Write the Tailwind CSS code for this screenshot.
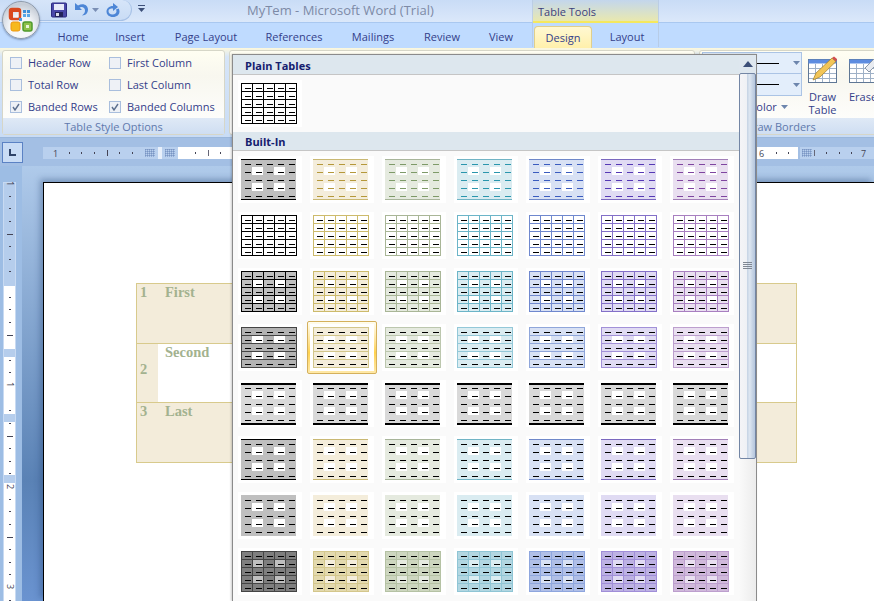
<!DOCTYPE html>
<html lang="en">
<head>
<meta charset="utf-8">
<title>MyTem - Microsoft Word (Trial)</title>
<script src="https://cdn.jsdelivr.net/npm/@tailwindcss/browser@4"></script>
</head>
<body class="m-0 overflow-hidden">
<div class="relative w-[874px] h-[601px] overflow-hidden flex flex-col bg-[#bfdbff] font-['Open_Sans',sans-serif] text-[11px] text-[#34408a]">

  <!-- title bar -->
  <div class="h-[23px] shrink-0 flex items-start bg-linear-to-b from-[#c9dcf6] to-[#dbe8fa] border-b border-[#a9c8f0]">
    <div class="ml-[22px] w-[110px] h-[21px] rounded-br-[12px] rounded-tr-[10px] bg-linear-to-b from-[#d6e5f9] to-[#c9dcf5] border-r border-b border-[#a6c1e6] flex items-center pl-[29px] gap-[6px]">
      <svg width="16" height="16" viewBox="0 0 16 16"><rect x="0.5" y="1" width="15" height="14" rx="1" fill="#4a48a8" stroke="#2c2b80"/><rect x="3" y="2" width="10" height="6" fill="#e7eaf8"/><rect x="4" y="10" width="8" height="5" fill="#23235a"/><rect x="5" y="11" width="3" height="3" fill="#d9dcea"/></svg>
      <svg width="16" height="16" viewBox="0 0 16 16"><path d="M2 1v7h7L6.5 5.5C9 4 12 5.500 12 8.500c0 2-1 3.500-3 5 4 0 6-3 6-6C15 3 10 .5 5 3.500z" fill="#4d86d6"/></svg>
      <svg class="-ml-[3px]" width="7" height="5" viewBox="0 0 7 5"><path d="M0 0h7L3.500 4z" fill="#7a8fb5"/></svg>
      <svg width="16" height="16" viewBox="0 0 16 16"><path d="M8 1v3C4 4 1.500 6.500 1.500 9.500S4 15 8 15s6.500-2.500 6.500-5.500c0-1-.3-2-.8-3l-2.700 1c.3.600.5 1.200.5 2 0 1.500-1.500 3-4 3s-4-1.500-4-3.500S5.500 6.500 8 6.500V9l5-4z" fill="#4d86d6"/></svg>
    </div>
    <svg class="ml-[6px] mt-[5px]" width="7" height="9" viewBox="0 0 7 9"><rect y="0" width="7" height="1" fill="#3c4f78"/><path d="M0 3h7L3.500 7z" fill="#3c4f78"/></svg>
    <div class="ml-[102px] mt-px text-[13px] leading-[18px] text-[#7d8aa6] whitespace-nowrap">MyTem - Microsoft Word (Trial)</div>
  </div>

  <!-- tabs -->
  <div class="h-[25px] shrink-0 flex items-end pl-[44px] bg-[#bfdbff] text-center">
    <div class="w-[58px] h-[21px] leading-[20px]">Home</div>
    <div class="w-[56px] h-[21px] leading-[20px]">Insert</div>
    <div class="w-[96px] h-[21px] leading-[20px]">Page Layout</div>
    <div class="w-[80px] h-[21px] leading-[20px]">References</div>
    <div class="w-[78px] h-[21px] leading-[20px]">Mailings</div>
    <div class="w-[60px] h-[21px] leading-[20px]">Review</div>
    <div class="w-[58px] mr-[4px] h-[21px] leading-[20px]">View</div>
    <div class="w-[58px] h-[22px] leading-[21px] rounded-t-[4px] border border-b-0 border-[#e0cf8c] bg-linear-to-b from-[#fff8d2] to-[#fff0ab]">Design</div>
    <div class="w-[70px] h-[21px] leading-[20px]">Layout</div>
  </div>

  <!-- ribbon -->
  <div class="h-[90px] shrink-0 flex gap-[4px] pt-[2px] pl-[2px] bg-linear-to-b from-[#fdf8dc] via-[#d6e5f8] via-10% to-[#c9dcf5] border-b border-[#9ab7dc] overflow-hidden">
    <div class="w-[223px] h-[85px] shrink-0 flex flex-col rounded-[3px] border border-[#d6d6c8] bg-linear-to-b from-[#fffef2] via-[#f8f7ef] via-30% to-white">
      <div class="flex-1 grid grid-cols-[99px_1fr] grid-rows-[22px_22px_22px] pl-[7px] pt-[1px]">
        <label class="flex items-center gap-[6px]"><span class="w-[12px] h-[12px] border border-[#a9bedd] bg-[#eef1f6]"></span>Header Row</label>
        <label class="flex items-center gap-[6px]"><span class="w-[12px] h-[12px] border border-[#a9bedd] bg-[#eef1f6]"></span>First Column</label>
        <label class="flex items-center gap-[6px]"><span class="w-[12px] h-[12px] border border-[#a9bedd] bg-[#eef1f6]"></span>Total Row</label>
        <label class="flex items-center gap-[6px]"><span class="w-[12px] h-[12px] border border-[#a9bedd] bg-[#eef1f6]"></span>Last Column</label>
        <label class="flex items-center gap-[6px]"><span class="w-[12px] h-[12px] border border-[#a9bedd] bg-[#eef1f6] flex items-center justify-center"><svg width="8" height="8" viewBox="0 0 8 8"><path d="M1 4l2 3 4-6" fill="none" stroke="#5c6f8e" stroke-width="1.400"/></svg></span>Banded Rows</label>
        <label class="flex items-center gap-[6px]"><span class="w-[12px] h-[12px] border border-[#a9bedd] bg-[#eef1f6] flex items-center justify-center"><svg width="8" height="8" viewBox="0 0 8 8"><path d="M1 4l2 3 4-6" fill="none" stroke="#5c6f8e" stroke-width="1.400"/></svg></span>Banded Columns</label>
      </div>
      <div class="h-[16px] leading-[17px] text-center text-[#6079ad] bg-linear-to-b from-[#dfe9f6] to-[#cfdef2]">Table Style Options</div>
    </div>
    <div class="w-[466px] h-[85px] shrink-0 rounded-[3px] border border-[#d6d6c8] bg-linear-to-b from-[#fffef2] to-white"></div>
    <div class="w-[200px] h-[85px] shrink-0 flex flex-col rounded-[3px] border border-[#d6d6c8] bg-linear-to-b from-[#fffef2] via-[#f8f7ef] via-30% to-white">
      <div class="flex-1 flex pl-[2px] pt-px">
        <div class="w-[100px] shrink-0">
          <div class="h-[22px] flex items-center bg-[#e3eefb] border border-[#abc4e5] pl-[52px]"><span class="w-[24px] h-px bg-black"></span><svg class="ml-[14px]" width="7" height="4" viewBox="0 0 7 4"><path d="M0 0h7L3.500 4z" fill="#6d86ad"/></svg></div>
          <div class="h-[22px] flex items-center bg-[#e3eefb] border border-t-0 border-[#abc4e5] pl-[52px]"><span class="w-[24px] h-[1.500px] bg-black"></span><svg class="ml-[14px]" width="7" height="4" viewBox="0 0 7 4"><path d="M0 0h7L3.500 4z" fill="#6d86ad"/></svg></div>
          <div class="h-[22px] leading-[22px] pl-[25px] flex items-center gap-[4px] whitespace-nowrap">Pen Color<svg width="7" height="4" viewBox="0 0 7 4"><path d="M0 0h7L3.500 4z" fill="#6d86ad"/></svg></div>
        </div>
        <div class="w-[45px] shrink-0 -ml-[2px] flex flex-col items-center text-center leading-[13px]">
          <svg class="mt-[4px] mb-[6px]" width="30" height="28" viewBox="0 0 30 28"><rect x="0.500" y="3.500" width="28" height="23" fill="#fff" stroke="#5f7795"/><rect x="0.500" y="3.500" width="28" height="4" fill="#5d8ce0"/><path d="M7.500 8v18M14.500 8v18M21.500 8v18M1 12.500h27M1 17.500h27M1 22.500h27" stroke="#9fb1c7"/><path d="M5 24l3-7L24 2l4 3.500-16 15.500z" fill="#f2c557" stroke="#9a7a2a" stroke-width=".7"/><path d="M24 2l2-1.500 3 2.500-1 2.500z" fill="#d24e4e"/></svg>
          <div>Draw<br>Table</div>
        </div>
        <div class="w-[40px] shrink-0 ml-[4px] flex flex-col items-start leading-[13px]">
          <svg class="mt-[4px] mb-[6px]" width="30" height="28" viewBox="0 0 30 28"><rect x="0.500" y="3.500" width="28" height="23" fill="#fff" stroke="#5f7795"/><rect x="0.500" y="3.500" width="28" height="4" fill="#5d8ce0"/><path d="M7.500 8v18M14.500 8v18M21.500 8v18M1 12.500h27M1 17.500h27M1 22.500h27" stroke="#9fb1c7"/><path d="M16 12l10-10 4 4-10 10z" fill="#e8ebf0" stroke="#8a97a8"/></svg>
          <div class="whitespace-nowrap">Eraser</div>
        </div>
      </div>
      <div class="h-[16px] leading-[17px] pl-[45px] text-[#6079ad] bg-linear-to-b from-[#dfe9f6] to-[#cfdef2]">Draw Borders</div>
    </div>
  </div>

  <!-- horizontal ruler row -->
  <div class="h-[28px] shrink-0 flex items-center bg-[#a3bfe4] pl-[2px]">
    <div class="w-[21px] h-[21px] shrink-0 border border-[#5b82c4] bg-[#c9dcf5] flex items-center justify-center">
      <svg width="11" height="11" viewBox="0 0 11 11"><path d="M2 2h2v5h5v2H2z" fill="#2f4368"/></svg>
    </div>
    <svg class="ml-[20px] mt-[1px]" width="831" height="14" viewBox="43 144 831 14" font-size="9">
      <rect x="43" y="145" width="115" height="12" fill="#b9d0ee"/>
      <rect x="158" y="145" width="4" height="12" fill="#e8f0fb"/>
      <rect x="162" y="145" width="16" height="12" fill="#b9d0ee"/>
      <rect x="178" y="145" width="620" height="12" fill="#fff"/>
      <rect x="800" y="145" width="74" height="12" fill="#b9d0ee"/>
      <text x="53" y="155" fill="#445">1</text>
      <path d="M69 150h1v2h-1zM81 150h1v2h-1zM94 150h1v2h-1zM107 148h1v6h-1zM119 150h1v2h-1zM132 150h1v2h-1zM195 150h1v2h-1zM220 150h1v2h-1zM776 150h1v2h-1zM788 150h1v2h-1zM826 150h1v2h-1zM839 150h1v2h-1zM851 150h1v2h-1z" fill="#445"/>
      <path d="M208 148h1v6h-1zM814 148h1v6h-1z" fill="#667"/>
      <text x="759" y="155" fill="#445">6</text>
      <text x="861" y="155" fill="#445">7</text>
      <path d="M146 147v8M148 147v8M150 147v8M152 147v8M154 147v8M145 148h9M145 150h9M145 152h9M145 154h9M166 147v8M168 147v8M170 147v8M172 147v8M174 147v8M165 148h9M165 150h9M165 152h9M165 154h9M803 147v8M805 147v8M807 147v8M809 147v8M811 147v8M802 148h9M802 150h9M802 152h9M802 154h9" stroke="#4e6ea8" stroke-width=".7" stroke-dasharray="1 1" fill="none"/>
    </svg>
  </div>

  <!-- document area -->
  <div class="flex-1 min-h-0 flex bg-linear-to-b from-[#afcaea] via-[#5a82b5] via-72% to-[#6a93d0]">
    <div class="w-[22px] shrink-0 bg-[#9dbde4] pl-[3px] pt-[16px]">
      <svg width="13" height="420" viewBox="3 181 13 420" font-size="9">
        <rect x="3" y="181" width="13" height="420" fill="#fff"/>
        <rect x="3" y="181" width="13" height="104" fill="#b5cdec"/>
        <rect x="3" y="348" width="13" height="8" fill="#b5cdec"/>
        <rect x="3" y="413" width="13" height="8" fill="#b5cdec"/>
        <rect x="3" y="474" width="13" height="8" fill="#b5cdec"/>
        <rect x="3.500" y="181.500" width="12" height="420" fill="none" stroke="#c8daf2"/>
        <path d="M9 195h2v1H9zM9 207h2v1H9zM9 220h2v1H9zM7 233h6v1H7zM9 245h2v1H9zM9 258h2v1H9zM9 270h2v1H9zM9 296h2v1H9zM9 308h2v1H9zM9 321h2v1H9zM7 334h6v1H7zM9 359h2v1H9zM9 371h2v1H9zM9 409h2v1H9zM9 422h2v1H9zM7 435h6v1H7zM9 447h2v1H9zM9 460h2v1H9zM9 472h2v1H9zM9 498h2v1H9zM9 510h2v1H9zM9 523h2v1H9zM7 536h6v1H7zM9 548h2v1H9zM9 561h2v1H9zM9 573h2v1H9zM9 599h2v1H9z" fill="#445"/>
        <text transform="translate(7 180) rotate(90)" fill="#445">1</text>
        <text transform="translate(7 381) rotate(90)" fill="#445">1</text>
        <text transform="translate(7 483) rotate(90)" fill="#445">2</text>
        <text transform="translate(7 583) rotate(90)" fill="#445">3</text>
      </svg>
    </div>
    <div class="flex-1 min-w-0 pl-[21px] pt-[16px]">
      <div class="h-full bg-white border-t border-l border-black shadow-[-3px_-3px_6px_rgba(30,60,110,0.35)] pl-[92px] pt-[100px] font-['Liberation_Serif',serif] font-bold text-[14.500px] leading-[16px] text-[#a3b28f]">
        <div class="w-[661px] border border-[#d8ca8c] bg-[#f3ecda] grid grid-cols-[21px_1fr]">
          <div class="h-[59px] pl-[3px] pt-0">1</div><div class="pl-[7px]">First</div>
          <div class="h-[59px] border-t border-[#d8ca8c] pl-[3px] pb-[8px] flex items-center">2</div><div class="border-t border-[#d8ca8c] bg-white pl-[7px]">Second</div>
          <div class="h-[60px] border-t border-[#d8ca8c] pl-[3px]">3</div><div class="border-t border-[#d8ca8c] pl-[7px]">Last</div>
        </div>
      </div>
    </div>
  </div>

  <!-- office button -->
  <div class="absolute left-[2px] top-[1px] w-[38px] h-[38px] rounded-full border border-[#8f9bab] bg-[radial-gradient(circle_at_50%_70%,#f5f7fa_35%,#c5ccd6_75%,#e5e9ef)] shadow-[0_1px_2px_rgba(60,80,120,.5)] flex items-center justify-center">
    <svg width="26" height="26" viewBox="0 0 26 26">
      <path d="M2 2h11v3H5v6H2z" fill="#d9491e"/><rect x="2" y="2" width="10" height="10" rx="2" fill="none" stroke="#d9491e" stroke-width="2.500"/>
      <rect x="15" y="3" width="3" height="3" fill="#3f8fd8"/><rect x="19" y="3" width="3" height="3" fill="#3f8fd8"/><rect x="15" y="7" width="3" height="3" fill="#5aa7e6"/><rect x="19" y="7" width="3" height="3" fill="#5aa7e6"/><rect x="11" y="11" width="3" height="3" fill="#4e9be0"/>
      <rect x="3" y="15" width="9" height="9" rx="2" fill="#f6b91e" stroke="#ee9711"/><rect x="15" y="15" width="9" height="9" rx="2" fill="#8ec04a" stroke="#4f9a2c" stroke-width="1.500"/><rect x="18" y="18" width="3" height="3" fill="#e8f3d8"/>
    </svg>
  </div>

  <!-- contextual tab -->
  <div class="absolute left-[532px] top-0 w-[127px] h-[47px] border-x border-[#b4c6dd]/70 pointer-events-none">
    <div class="h-[23px] pl-[5px] pt-[4px] leading-[15px] bg-linear-to-b from-[#c3d6ec] to-[#e9e8ae] border-b-2 border-[#f5e85e] text-[#3c3f7c]">Table Tools</div>
  </div>

  <!-- gallery popup -->
  <div class="absolute left-[232px] top-[54px] w-[525px] h-[547px] flex border-l border-t border-r border-[#8b8b8b] bg-[#fafafa] shadow-[-1px_0_2px_rgba(0,0,0,.2)]">
    <div class="w-[506px] shrink-0 overflow-hidden">
      <div class="h-[20px] pl-[12px] font-bold text-[#15206e] leading-[22px] bg-[#dde7ee] border-b border-[#c5c5c5]">Plain Tables</div>
      <div class="mt-[5px] mb-[5px] ml-[5px] w-[64px] h-[47px]" id="plain"></div>
      <div class="h-[19px] pl-[12px] font-bold text-[#15206e] leading-[20px] bg-[#dde7ee] border-b border-[#c5c5c5]">Built-In</div>
      <div class="mt-[5px] ml-[5px] grid grid-cols-[repeat(7,64px)] auto-rows-[47px] gap-x-[8px] gap-y-[9px]" id="gallery"></div>
    </div>
    <div class="flex-1 flex flex-col bg-[#f0f0f2]">
      <div class="h-[18px] shrink-0 flex items-center justify-center bg-[#dee7ef]"><svg width="10" height="6" viewBox="0 0 10 6"><path d="M5 0l5 6H0z" fill="#3c4f78"/></svg></div>
      <div class="h-[386px] shrink-0 rounded-[2px] border border-[#7386a5] bg-[linear-gradient(90deg,#f4f4f7_0%,#eff1f5_45%,#c9d6e6_50%,#dde6f1_65%,#c4d2e4_85%,#b6c7de_100%)] flex items-center justify-center pb-[2px]">
        <svg width="9" height="7" viewBox="0 0 9 7"><path d="M0 .5h9M0 2.500h9M0 4.500h9M0 6.500h9" stroke="#7f8793"/></svg>
      </div>
      <div class="flex-1 bg-linear-to-r from-[#fafafa] to-[#ececec]"></div>
    </div>
  </div>
</div>

<script>
  var bands = ['#bfbfbf','#f4eddb','#e5eadf','#daecf1','#d8e1f4','#e0dbf3','#e9dff0'];
  var accent = ['#000000','#c9b873','#a8b59a','#71b4c5','#6f88c9','#7b68bf','#a27fb8'];
  var dashes = ['#000000','#b5983a','#7e9a68','#2a96ad','#3a5bbf','#5538b5','#7f45a0'];
  var grids  = ['#000000','#cdbb6c','#a9b697','#6cb5c8','#6f88ce','#8370c8','#a87fc0'];
  var soft   = ['#444444','#d3c68a','#bcc7ae','#93c8d8','#8fa6da','#a291d8','#bd9fce'];
  var deep   = ['#7f7f7f','#e3d9ae','#cdd6bf','#b2d6e1','#b0bfe7','#bdb2e3','#d0b9db'];
  var deepG  = ['#444444','#d4c78c','#b5c2a4','#8fc5d5','#8ea6de','#a08ed8','#bd9fce'];

  function rect(x, y, w, h, f) { return '<rect x="'+x+'" y="'+y+'" width="'+w+'" height="'+h+'" fill="'+f+'"/>'; }
  function thumb(o) {
    var s = '';
    s += rect(3, 3, o.grid || o.hlines ? 56 : 55, 41, o.fill);
    if (o.blocks) {
      [[14,11],[36,11],[14,27],[36,27]].forEach(function (p) { s += rect(p[0], p[1], 11, 8, o.blocks); });
    }
    var g = o.grid || o.hlines;
    if (g) {
      for (var r = 0; r <= 5; r++) s += rect(3, 3 + r * 8, 56, 1, g);
      s += rect(3, 3, 1, 41, g);
      s += rect(58, 3, 1, 41, g);
    }
    if (o.grid) { for (var c = 1; c < 5; c++) s += rect(3 + c * 11, 3, 1, 41, g); }
    if (o.line) { s += rect(3, 3, 55, 1, o.line); s += rect(3, 43, 55, 1, o.line); }
    if (o.thick) { s += rect(3, 3, 55, 2, '#000'); s += rect(3, 43, 55, 2, '#000'); }
    for (var i = 0; i < 5; i++) for (var j = 0; j < 5; j++) s += rect(7 + j * 11, 8 + i * 8, 6, 1, o.dash || '#000');
    return '<svg class="block" width="64" height="47" viewBox="0 0 64 47" shape-rendering="crispEdges"><rect width="64" height="47" fill="#fff"/>' + s + '</svg>';
  }
  function style(row, c) {
    switch (row) {
      case 0: return { fill: bands[c], line: accent[c], dash: dashes[c], blocks: '#fff' };
      case 1: return { fill: '#fff', grid: grids[c] };
      case 2: return { fill: bands[c], grid: grids[c], blocks: '#fff' };
      case 3: return { fill: c ? bands[c] : '#b3b3b3', hlines: soft[c], blocks: '#fff' };
      case 4: return { fill: '#d9d9d9', thick: true, blocks: '#fff' };
      case 5: return { fill: bands[c], line: accent[c], blocks: '#fff' };
      case 6: return { fill: bands[c], blocks: '#fff' };
      default: return { fill: deep[c], grid: deepG[c], blocks: bands[c] };
    }
  }
  document.getElementById('plain').innerHTML = thumb({ fill: '#fff', grid: '#000' });
  var html = '';
  for (var r = 0; r < 8; r++) for (var c = 0; c < 7; c++) {
    var t = thumb(style(r, c));
    if (r === 3 && c === 1) {
      html += '<div class="relative"><div class="absolute -inset-[3px] rounded-[2px] border border-[#d4b05c] bg-linear-to-b from-[#fffdf0] via-[#ffd24d] via-60% to-[#ffe9a8]"></div><div class="relative">' + t + '</div></div>';
    } else {
      html += '<div>' + t + '</div>';
    }
  }
  document.getElementById('gallery').innerHTML = html;
</script>
</body>
</html>
